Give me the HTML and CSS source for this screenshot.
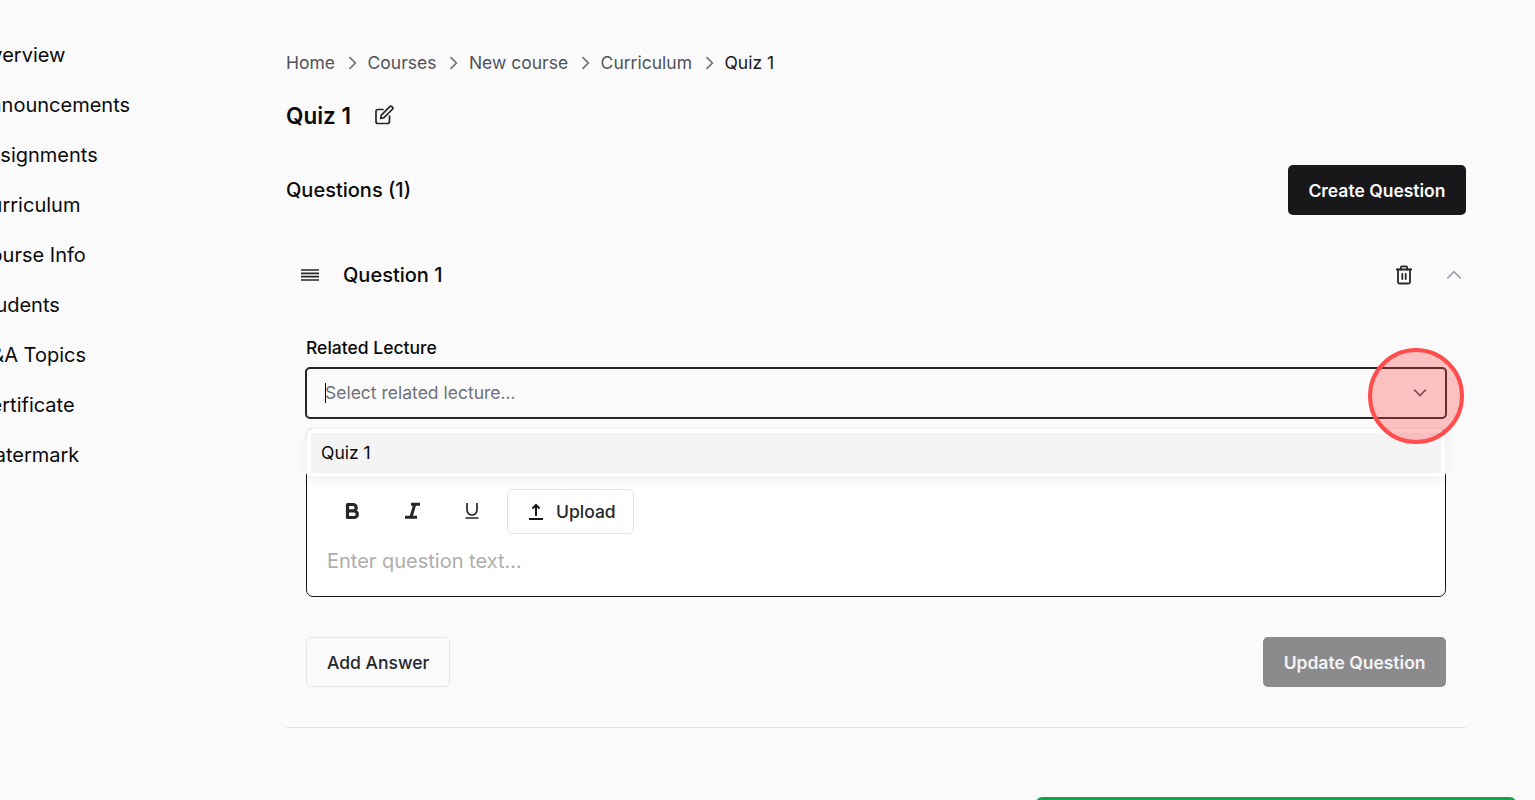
FILE: index.html
```html
<!DOCTYPE html>
<html lang="en">
<head>
<meta charset="utf-8">
<title>Quiz 1</title>
<link rel="stylesheet" href="styles.css">
</head>
<body>
<div class="page">
  <nav class="sidebar">
    <a class="side-item">Overview</a>
    <a class="side-item">Announcements</a>
    <a class="side-item">Assignments</a>
    <a class="side-item">Curriculum</a>
    <a class="side-item">Course Info</a>
    <a class="side-item">Students</a>
    <a class="side-item">Q&amp;A Topics</a>
    <a class="side-item">Certificate</a>
    <a class="side-item">Watermark</a>
  </nav>
  <main class="main">
    <div class="crumbs">
      <span>Home</span>
      <svg class="crumb-sep" viewBox="0 0 24 24"><path d="M9 5l7 7-7 7"/></svg>
      <span>Courses</span>
      <svg class="crumb-sep" viewBox="0 0 24 24"><path d="M9 5l7 7-7 7"/></svg>
      <span>New course</span>
      <svg class="crumb-sep" viewBox="0 0 24 24"><path d="M9 5l7 7-7 7"/></svg>
      <span>Curriculum</span>
      <svg class="crumb-sep" viewBox="0 0 24 24"><path d="M9 5l7 7-7 7"/></svg>
      <span class="crumb-current">Quiz 1</span>
    </div>
    <div class="title-row">
      <h1 class="title">Quiz 1</h1>
      <svg class="edit-icon" viewBox="0 0 20 20"><path d="M9 4.500H4a2 2 0 0 0-2 2V16.500a2 2 0 0 0 2 2H13.500a2 2 0 0 0 2-2V11"/><path d="M15.500 1.800a1.900 1.900 0 0 1 2.700 2.700L10 12.700l-3.400.8.8-3.400z"/></svg>
    </div>
    <div class="q-head">
      <h2 class="q-count">Questions (1)</h2>
      <button class="btn-dark">Create Question</button>
    </div>
    <section class="question">
      <div class="q-row">
        <svg class="drag-icon" viewBox="0 0 18 12"><path d="M0 1h18M0 4.300h18M0 7.600h18M0 11h18"/></svg>
        <span class="q-name">Question 1</span>
        <svg class="trash-icon" viewBox="0 0 20 20"><path d="M2.800 4.500H17.200"/><path d="M6.800 4.500V2.500a1.200 1.200 0 0 1 1.200-1.200h4a1.200 1.200 0 0 1 1.200 1.200V4.500"/><path d="M4 4.500V17a1.500 1.500 0 0 0 1.500 1.500h9a1.500 1.500 0 0 0 1.500-1.500V4.500"/><path d="M8.300 9v5M11.700 9v5"/></svg>
        <svg class="up-icon" viewBox="0 0 24 24"><path d="M4 16l8-8 8 8"/></svg>
      </div>
      <div class="q-body">
        <label class="field-label">Related Lecture</label>
        <div class="select">
          <span class="caret"></span>
          <span class="select-ph">Select related lecture...</span>
          <svg class="select-chev" viewBox="0 0 24 24"><path d="M5 8l7 7 7-7"/></svg>
          <div class="menu"><div class="menu-item">Quiz 1</div></div>
          <div class="hotspot"></div>
        </div>
        <div class="editor">
          <div class="toolbar">
            <span class="tool tool-b">
              <svg viewBox="0 0 20 20"><path d="M5.500 3.500h5.500a3.200 3.200 0 0 1 0 6.400H5.500zM5.500 9.900h6.500a3.300 3.300 0 0 1 0 6.600H5.500z"/></svg>
            </span>
            <span class="tool tool-i">
              <svg viewBox="0 0 20 20"><path d="M9 3.200H18M3 16.200H15M12.800 3.200L9 16.200"/></svg>
            </span>
            <span class="tool tool-u">
              <svg viewBox="0 0 20 20"><path d="M5 2v7a5 5 0 0 0 10 0V2M3.500 17H16.500"/></svg>
            </span>
            <button class="upload">
              <svg viewBox="0 0 20 20"><path d="M10 14V3M6.500 6.500L10 3l3.500 3.500M3 17H17"/></svg>
              Upload
            </button>
          </div>
          <div class="editor-ph">Enter question text...</div>
        </div>
        <div class="actions">
          <button class="btn-light">Add Answer</button>
          <button class="btn-grey">Update Question</button>
        </div>
      </div>
    </section>
  </main>
</div>
<div class="toast"></div>
</body>
</html>
```
FILE: styles.css
```css
* { box-sizing: border-box; }
html, body { height: 100%; }
body {
  margin: 0;
  background: #fafafa;
  color: #0a0a0a;
  font-family: Inter, "Liberation Sans", sans-serif;
  overflow: hidden;
  position: relative;
}
.page { display: flex; align-items: flex-start; }
.sidebar {
  width: 286px;
  flex: none;
  padding: 30px 0 0;
  display: flex;
  flex-direction: column;
  text-indent: -24px;
}
.side-item {
  height: 50px;
  line-height: 50px;
  font-size: 20px;
  color: #0a0a0a;
  white-space: nowrap;
}
.main { width: 1180px; padding-top: 50px; }
.crumbs {
  display: flex;
  align-items: center;
  height: 25px;
  font-size: 17.500px;
  color: #52525b;
}
.crumb-sep {
  width: 20px;
  height: 20px;
  margin: 0 5.500px 0 7px;
  fill: none;
  stroke: #71717a;
  stroke-width: 2;
}
.crumb-current { color: #18181b; }
.title-row {
  display: flex;
  align-items: center;
  margin-top: 23px;
  height: 36px;
}
.title { margin: 0; font-size: 22.500px; font-weight: 600; line-height: 36px; }
.edit-icon {
  width: 20px;
  height: 20px;
  margin-left: 23px;
  margin-top: -2px;
  fill: none;
  stroke: #27272a;
  stroke-width: 1.700;
  stroke-linecap: round;
  stroke-linejoin: round;
}
.q-head {
  display: flex;
  align-items: center;
  justify-content: space-between;
  margin-top: 31px;
}
.q-count { margin: 0; font-size: 20px; font-weight: 500; }
.btn-dark, .btn-grey {
  height: 50px;
  padding: 0 20.500px;
  border: 0;
  border-radius: 5px;
  font: 600 17.500px Inter, sans-serif;
  color: #fafafa;
  background: #18181b;
}
.btn-grey { background: #8b8b8d; color: #f4f4f5; }
.q-row {
  display: flex;
  align-items: center;
  height: 50px;
  margin-top: 35px;
  padding: 0 2px 0 15px;
}
.drag-icon { width: 18px; height: 12px; fill: none; stroke: #27272a; stroke-width: 1.700; }
.q-name { margin-left: 24px; font-size: 20px; font-weight: 500; flex: 1; }
.trash-icon {
  width: 20px;
  height: 20px;
  fill: none;
  stroke: #27272a;
  stroke-width: 1.800;
  stroke-linecap: round;
  stroke-linejoin: round;
}
.up-icon {
  width: 20px;
  height: 20px;
  margin-left: 30px;
  fill: none;
  stroke: #a1a1aa;
  stroke-width: 2;
}
.q-body { padding: 0 20px; margin-top: 35px; }
.field-label {
  display: block;
  font-size: 17.500px;
  font-weight: 500;
  line-height: 26px;
}
.select {
  position: relative;
  display: flex;
  align-items: center;
  height: 52px;
  margin: 6px -1px 0;
  padding: 0 15px 0 18px;
  border: 2px solid #27272a;
  border-radius: 5px;
}
.caret { width: 1px; height: 20px; background: #0a0a0a; flex: none; margin-right: -1px; }
.select-ph { flex: 1; font-size: 17.500px; color: #71717a; padding-bottom: 2px; }
.select-chev { width: 20px; height: 20px; fill: none; stroke: #52525b; stroke-width: 2; }
.menu {
  position: absolute;
  z-index: 2;
  left: -1px;
  right: -1px;
  top: 59px;
  height: 50px;
  padding: 4px;
  background: #fff;
  border: 1px solid #efefef;
  border-radius: 6px;
  box-shadow: 0 4px 8px rgba(0, 0, 0, .05);
}
.menu-item {
  height: 40px;
  line-height: 40px;
  padding-left: 10px;
  font-size: 17.500px;
  background: #f4f4f5;
  border-radius: 3px;
}
.hotspot {
  position: absolute;
  z-index: 3;
  left: 1061px;
  top: -21px;
  width: 96px;
  height: 96px;
  border: 4px solid #ff4d4d;
  border-radius: 50%;
  background: rgba(255, 60, 60, .3);
}
.editor {
  margin-top: 9px;
  height: 169px;
  background: #fff;
  border: 1px solid #18181b;
  border-radius: 7px;
  padding: 60px 20px 0;
}
.toolbar { display: flex; align-items: center; height: 45px; padding-left: 15px; gap: 40px; }
.tool { width: 20px; height: 20px; display: block; margin-top: -1px; }
.tool svg { display: block; width: 20px; height: 20px; fill: none; stroke: #27272a; stroke-width: 1.700; }
.tool-b svg { stroke-width: 3.200; stroke-linejoin: round; }
.tool-i svg { stroke-width: 3; }
.upload {
  display: flex;
  align-items: center;
  gap: 10px;
  height: 45px;
  padding: 0 17px 0 18px;
  margin-left: -15px;
  background: transparent;
  border: 1px solid #e4e4e7;
  border-radius: 5px;
  font: 500 17.500px Inter, sans-serif;
  color: #27272a;
}
.upload svg { width: 20px; height: 20px; fill: none; stroke: #18181b; stroke-width: 2; }
.editor-ph { margin-top: 15px; font-size: 20px; color: #adadad; }
.actions {
  display: flex;
  justify-content: space-between;
  margin-top: 40px;
  padding-bottom: 40px;
}
.btn-light {
  height: 50px;
  padding: 0 20px;
  background: transparent;
  border: 1px solid #e4e4e7;
  border-radius: 5px;
  font: 500 17.500px Inter, sans-serif;
  color: #27272a;
}
.question { border-bottom: 1px solid #e4e4e7; }
.toast {
  position: absolute;
  left: 1036px;
  top: 797px;
  width: 480px;
  height: 20px;
  background: #16a34a;
  border-radius: 6px;
}
```
